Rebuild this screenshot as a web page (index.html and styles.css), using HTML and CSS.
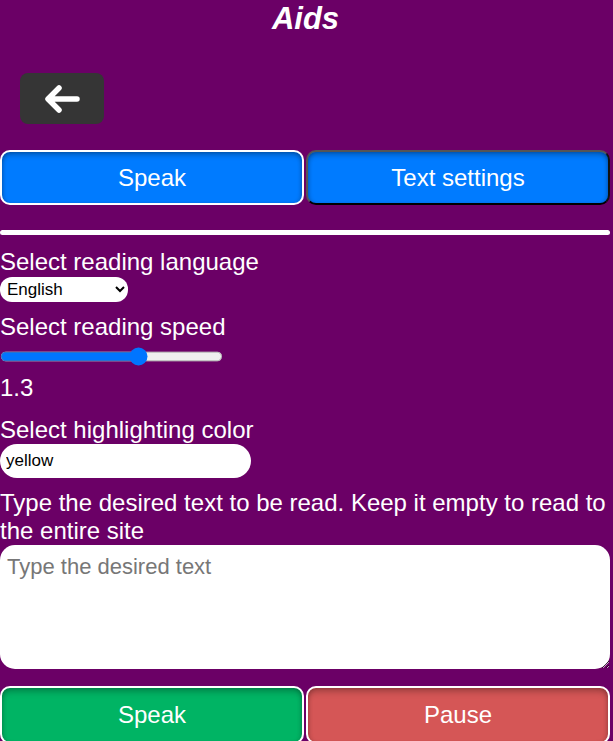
FILE: index.html
```html
<!DOCTYPE html>
<html>
<head>
<meta charset="utf-8">
<link rel="stylesheet" href="styles.css">
</head>
<body>
<div class="page">
  <h1 class="title">Aids</h1>
  <div class="back-row">
    <button class="back-btn" aria-label="Back">
      <svg width="42" height="32" viewBox="0 0 42 32"><path d="M36 16H8M18 5L7 16l11 11" fill="none" stroke="#fff" stroke-width="5.5" stroke-linecap="round" stroke-linejoin="round"/></svg>
    </button>
  </div>
  <div class="tabs">
    <button class="tab tab-active">Speak</button>
    <button class="tab tab-other">Text settings</button>
  </div>
  <div class="divider"></div>
  <div class="form">
    <label class="label">Select reading language</label>
    <select class="lang"><option>English</option></select>
    <label class="label label-speed">Select reading speed</label>
    <input class="speed" type="range" min="0.1" max="2" step="0.1" value="1.3">
    <div class="value">1.3</div>
    <label class="label label-color">Select highlighting color</label>
    <input class="color" type="text" value="yellow">
    <label class="label label-text">Type the desired text to be read. Keep it empty to read to the entire site</label>
    <textarea class="text" placeholder="Type the desired text"></textarea>
  </div>
  <div class="actions">
    <button class="act act-speak">Speak</button>
    <button class="act act-pause">Pause</button>
  </div>
</div>
</body>
</html>
```
FILE: styles.css
```css
html, body {
  margin: 0;
  padding: 0;
  background: #6b0066;
}
body {
  font-family: "Liberation Sans", Arial, sans-serif;
  color: #fff;
  overflow: hidden;
}
.page {
  width: 610px;
}
.title {
  margin: 0;
  font-size: 31px;
  font-style: italic;
  font-weight: bold;
  text-align: center;
  line-height: 38px;
  padding-left: 1px;
}
.back-row {
  padding: 35px 0 0 20px;
  height: 51px;
}
.back-btn {
  width: 84px;
  height: 51px;
  border: none;
  border-radius: 8px;
  background: #353535;
  display: flex;
  align-items: center;
  justify-content: center;
  padding: 0;
}
.tabs {
  display: flex;
  gap: 2px;
  margin-top: 26px;
}
.tab {
  flex: 1;
  height: 55px;
  border-radius: 10px;
  background: #007bff;
  color: #fff;
  font-family: "Liberation Sans", Arial, sans-serif;
  font-size: 24px;
  padding: 0;
  box-shadow: inset 0 5px 6px -3px rgba(0,0,0,0.35), inset 3px 0 5px -3px rgba(0,0,0,0.3), inset -3px 0 5px -3px rgba(0,0,0,0.3);
}
.tab-active {
  border: 2px solid #fff;
}
.tab-other {
  border: 2px solid;
  border-color: #555 #111 #000 #555;
}
.divider {
  height: 5px;
  background: #fff;
  border-radius: 3px;
  margin-top: 25px;
}
.form {
  display: flex;
  flex-direction: column;
  align-items: flex-start;
  padding-top: 13px;
}
.label {
  font-size: 24px;
  line-height: 28px;
}
.lang {
  margin-top: 1px;
  width: 128px;
  height: 25px;
  border: none;
  border-radius: 12px;
  background: #fff;
  font-family: "Liberation Sans", Arial, sans-serif;
  font-size: 17px;
  padding: 0 3px;
  color: #000;
}
.label-speed {
  margin-top: 11px;
}
.speed {
  zoom: 1.2;
  margin: 5px 0 0 0;
  width: 186px;
  accent-color: #0075ff;
}
.value {
  font-size: 24px;
  line-height: 28px;
  margin-top: 8px;
}
.label-color {
  margin-top: 14px;
}
.color {
  margin-top: 0;
  width: 251px;
  height: 34px;
  box-sizing: border-box;
  border: none;
  border-radius: 17px;
  padding: 0 6px;
  font-family: "Liberation Sans", Arial, sans-serif;
  font-size: 17px;
  color: #000;
}
.label-text {
  margin-top: 11px;
}
.text {
  margin-top: 0;
  width: 610px;
  height: 124px;
  box-sizing: border-box;
  border: none;
  border-radius: 15px;
  padding: 9px 7px 7px;
  font-family: "Liberation Sans", Arial, sans-serif;
  font-size: 22px;
  resize: vertical;
}
.text::placeholder {
  color: #777;
}
.actions {
  display: flex;
  gap: 2px;
  margin-top: 17px;
}
.act {
  flex: 1;
  height: 58px;
  border: 2px solid #fff;
  border-radius: 10px;
  color: #fff;
  font-family: "Liberation Sans", Arial, sans-serif;
  font-size: 24px;
  padding-bottom: 2px;
  box-shadow: inset 0 6px 7px -3px rgba(0,0,0,0.3), inset 3px 0 5px -3px rgba(0,0,0,0.25), inset -3px 0 5px -3px rgba(0,0,0,0.25);
}
.act-speak {
  background: #00b464;
}
.act-pause {
  background: #d55656;
}
```
